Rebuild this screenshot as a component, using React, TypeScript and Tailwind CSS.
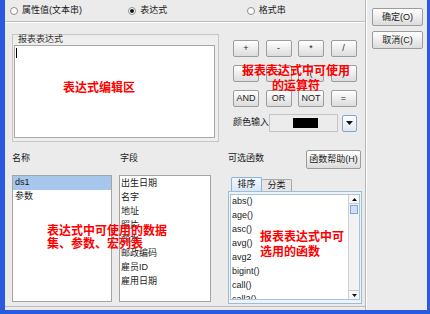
import React from 'react';

const FONT = "font-['Liberation_Sans','Noto_Sans_CJK_SC',sans-serif]";
const RED = "font-['Noto_Sans_CJK_SC',sans-serif] font-bold text-[12px] text-[#ff0000]";

const Btn: React.FC<{ children: React.ReactNode; className?: string }> = ({ children, className = '' }) => (
  <div
    className={`flex items-center justify-center rounded-[2px] border border-[#9c9c9c] bg-linear-to-b from-white to-[#dcdcdc] text-[#222] leading-none ${className}`}
  >
    {children}
  </div>
);

const Radio: React.FC<{ label: string; checked?: boolean }> = ({ label, checked }) => (
  <div className="flex w-[120px] items-center gap-[4px]">
    <span className="flex h-[8px] w-[8px] items-center justify-center rounded-full border border-[#8c8c8c] bg-white">
      {checked && <span className="h-[4px] w-[4px] rounded-full bg-[#111]" />}
    </span>
    <span>{label}</span>
  </div>
);

const fields = ['出生日期', '名字', '地址', '照片', '薪水', '邮政编码', '雇员ID', '雇用日期'];
const funcs = ['abs()', 'age()', 'asc()', 'avg()', 'avg2', 'bigint()', 'call()', 'call2()'];
const ops = ['+', '-', '*', '/', '<', '>', '(', ')', 'AND', 'OR', 'NOT', '='];

export default function App() {
  return (
    <div
      className={`relative flex h-[314px] w-[430px] border-b-[4px] border-l-[5px] border-r-[3px] border-[#2a5ae0] bg-[#ebebeb] text-[9px] text-[#1a1a1a] ${FONT}`}
    >
      {/* 主区域 */}
      <div className="flex w-[361px] flex-col border-r border-[#b8b8b8]">
        <div className="flex h-[21px] items-center pl-[5px]">
          <Radio label="属性值(文本串)" />
          <Radio label="表达式" checked />
          <Radio label="格式串" />
        </div>
        <div className="h-px bg-[#bcbcbc]" />
        <div className="h-px bg-white" />

        <div className="flex h-[284px] flex-col border-b border-[#bcbcbc] pl-[7px] pt-[11px]">
          {/* 上半部分 */}
          <div className="flex">
            <div className="flex h-[108px] w-[207px] flex-col border border-[#c6c6c6] bg-[#eeeeee] pb-[3px] pl-[1px] pr-[3px]">
              <div className="h-[10px] pl-[4px] leading-[9px] text-[#333]">报表表达式</div>
              <div className="flex-1 border border-[#a8a8a8] bg-white pl-[1px] pt-[2px]">
                <div className="h-[10px] w-px bg-black" />
              </div>
            </div>

            <div className="ml-[14px] flex flex-col pt-[6px]">
              <div className="grid grid-cols-[26px_26px_26px_26px] gap-x-[6.5px] gap-y-[8px]">
                {ops.map((op) => (
                  <Btn key={op} className="h-[17px]">
                    {op}
                  </Btn>
                ))}
              </div>
              <div className="mt-[7px] flex h-[18px] items-center">
                <span className="w-[36px]">颜色输入</span>
                <div className="flex h-[18px] w-[69px] items-center justify-center border border-[#c4c4c4] bg-[#ececec] pl-[3px]">
                  <div className="h-[10px] w-[25px] bg-black" />
                </div>
                <div className="ml-[4px] flex h-[17px] w-[15px] items-center justify-center rounded-[2px] border border-[#8aa2c8] bg-linear-to-b from-white to-[#e2e6ee]">
                  <svg width="7" height="4" viewBox="0 0 7 4">
                    <path d="M0 0h7L3.5 4z" fill="#111" />
                  </svg>
                </div>
              </div>
            </div>
          </div>

          {/* 下半部分 */}
          <div className="mt-[4px] flex">
            <div className="flex w-[100px] flex-col">
              <div className="flex h-[26px] items-center">名称</div>
              <div className="mt-[3px] h-[127px] border border-[#a4a4a4] bg-white">
                <div className="flex h-[14px] items-center bg-[#a6c6ec] pl-[2px]">ds1</div>
                <div className="flex h-[14px] items-center pl-[2px]">参数</div>
              </div>
            </div>

            <div className="ml-[7px] flex w-[92px] flex-col">
              <div className="flex h-[26px] items-center pl-[1px]">字段</div>
              <div className="mt-[3px] h-[127px] border border-[#a4a4a4] bg-white pt-px">
                {fields.map((f) => (
                  <div key={f} className="flex h-[14px] items-center pl-[1px]">
                    {f}
                  </div>
                ))}
              </div>
            </div>

            <div className="ml-[17px] flex w-[134px] flex-col">
              <div className="flex h-[26px] items-center justify-between pr-[1px]">
                <span>可选函数</span>
                <Btn className="h-[19px] w-[55px]">函数帮助(H)</Btn>
              </div>
              <div className="mt-[3px] flex h-[16px] items-end pl-[3px]">
                <div className="flex h-[14px] w-[31px] items-center justify-center rounded-t-[2px] border border-b-0 border-[#8fb2d8] bg-linear-to-b from-[#f4f9ff] to-[#d6e7f8]">
                  排序
                </div>
                <div className="flex h-[12px] w-[30px] items-center justify-center rounded-t-[2px] border border-b-0 border-l-0 border-[#a8a8a8] bg-[#e6e6e6]">
                  分类
                </div>
              </div>
              <div className="h-[113px] border border-[#9fbcd4] bg-[#eef3f8] px-px pb-[3px] pt-[2px]">
                <div className="flex h-full border border-[#a9c4d6] bg-white">
                  <div className="flex-1 overflow-hidden pl-[1px]">
                    {funcs.map((f) => (
                      <div key={f} className="flex h-[14px] items-center">
                        {f}
                      </div>
                    ))}
                  </div>
                  <div className="flex w-[11px] flex-col border-l border-[#d0d0d0] bg-[#f2f2f2]">
                    <div className="flex h-[9px] items-center justify-center border-b border-[#c8c8c8] bg-[#f8f8f8]">
                      <svg width="5" height="3" viewBox="0 0 5 3">
                        <path d="M0 3h5L2.5 0z" fill="#111" />
                      </svg>
                    </div>
                    <div className="mx-px mt-px h-[9px] border border-[#7fa6dc] bg-[#cfe0f6]" />
                    <div className="flex-1" />
                    <div className="flex h-[9px] items-center justify-center border-t border-[#c8c8c8] bg-[#f8f8f8]">
                      <svg width="5" height="3" viewBox="0 0 5 3">
                        <path d="M0 0h5L2.5 3z" fill="#111" />
                      </svg>
                    </div>
                  </div>
                </div>
              </div>
            </div>
          </div>
        </div>
      </div>

      {/* 右侧按钮 */}
      <div className="flex flex-1 flex-col gap-[5px] border-l border-white pl-[5px] pt-[8px]">
        <Btn className="h-[18px] w-[51px] border-[#8a8aa6]">确定(O)</Btn>
        <Btn className="h-[18px] w-[51px] border-[#7c98dc]">取消(C)</Btn>
      </div>

      {/* 注释文字 */}
      <div className={`absolute left-[58px] top-[80px] leading-[14px] ${RED}`}>表达式编辑区</div>
      <div className={`absolute left-[236px] top-[62px] w-[110px] text-center leading-[15px] ${RED}`}>
        报表表达式中可使用
        <br />
        的运算符
      </div>
      <div className={`absolute left-[42px] top-[223px] leading-[13px] ${RED}`}>
        表达式中可使用的数据
        <br />
        集、参数、宏列表
      </div>
      <div className={`absolute left-[255px] top-[228px] leading-[15px] ${RED}`}>
        报表表达式中可
        <br />
        选用的函数
      </div>
    </div>
  );
}
